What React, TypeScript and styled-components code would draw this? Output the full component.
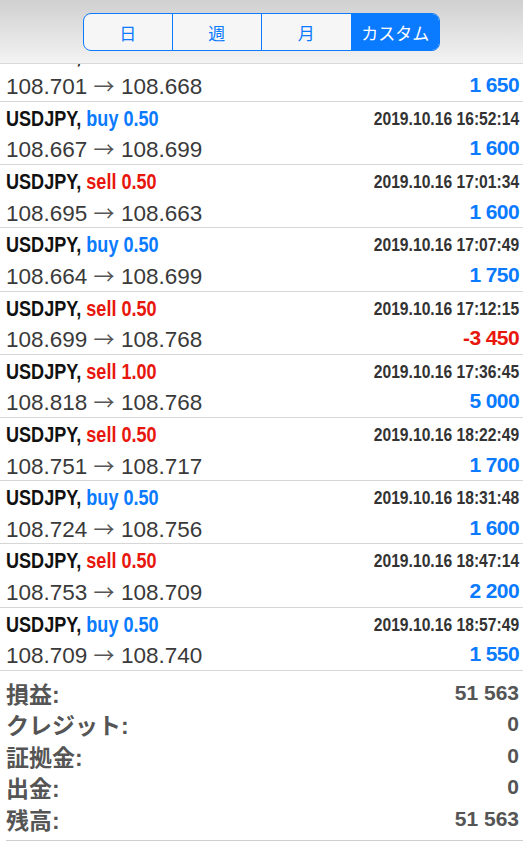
import React from "react";
import styled, { createGlobalStyle } from "styled-components";

const Global = createGlobalStyle`
  html, body { margin: 0; padding: 0; background: #fff; }
  body { font-family: "Liberation Sans", Arial, "Noto Sans CJK JP", sans-serif; }
  * { box-sizing: border-box; }
`;

const BLUE = "#0a7aff";
const RED = "#e8170d";

const Page = styled.div`
  width: 523px;
  height: 841px;
  overflow: hidden;
  display: flex;
  flex-direction: column;
  background: #fff;
`;

const Header = styled.header`
  height: 64px;
  flex: none;
  display: flex;
  justify-content: center;
  padding-top: 13px;
  background: linear-gradient(#d0d0d0, #f3f3f3);
  border-bottom: 1px solid #d8d8d8;
  position: relative;
  z-index: 1;
`;

const Segments = styled.div`
  display: flex;
  height: 38px;
  width: 357px;
  border: 1.5px solid ${BLUE};
  border-radius: 8px;
  overflow: hidden;
  background: #f6f6f6;
`;

const Segment = styled.div<{ $active?: boolean; $w: number }>`
  width: ${(p) => p.$w}px;
  display: flex;
  align-items: center;
  justify-content: center;
  font-family: "Noto Sans CJK JP", sans-serif;
  font-size: 17px;
  color: ${(p) => (p.$active ? "#fff" : BLUE)};
  background: ${(p) => (p.$active ? BLUE : "transparent")};
  & + & { border-left: 1.5px solid ${BLUE}; }
`;

const ListClip = styled.div`
  flex: none;
  overflow: hidden;
`;

const List = styled.div`
  margin-top: -25.3px;
`;

const Row = styled.div`
  height: 63.22px;
  padding: 3px 4px 0 6px;
  border-bottom: 1px solid #d6d6d6;
  display: grid;
  grid-template-columns: 1fr auto;
  grid-template-rows: 29px 29px;
  align-items: center;
`;

const Title = styled.div`
  font-weight: bold;
  font-size: 21.5px;
  color: #111;
  white-space: nowrap;
  transform: scaleX(0.84);
  transform-origin: left center;
`;

const Side = styled.span<{ $sell: boolean }>`
  color: ${(p) => (p.$sell ? RED : BLUE)};
`;

const Time = styled.div`
  font-weight: bold;
  font-size: 18px;
  color: #333;
  text-align: right;
  white-space: nowrap;
  transform: scaleX(0.87);
  transform-origin: right center;
`;

const Prices = styled.div`
  font-size: 22.5px;
  color: #3a3a3a;
  white-space: nowrap;
`;

const Arrow = styled.span`
  font-family: "Noto Sans CJK JP", sans-serif;
  font-size: 21px;
  color: #555;
`;

const Profit = styled.div<{ $neg: boolean }>`
  font-weight: bold;
  font-size: 21px;
  letter-spacing: -0.6px;
  color: ${(p) => (p.$neg ? RED : BLUE)};
  text-align: right;
  white-space: nowrap;
`;

const Summary = styled.div`
  margin-left: 6px;
  padding: 6px 4px 5px 0;
  border-bottom: 1px solid #cfcfcf;
`;

const SumRow = styled.div`
  height: 31.6px;
  display: flex;
  align-items: center;
  justify-content: space-between;
  font-weight: bold;
  color: #555;
`;

const SumLabel = styled.span`
  font-size: 23px;
`;

const SumValue = styled.span`
  font-size: 21px;
`;

type Trade = { side: "buy" | "sell"; vol: string; time: string; from: string; to: string; profit: string };

const trades: Trade[] = [
  { side: "sell", vol: "0.50", time: "2019.10.16 16:41:20", from: "108.701", to: "108.668", profit: "1 650" },
  { side: "buy", vol: "0.50", time: "2019.10.16 16:52:14", from: "108.667", to: "108.699", profit: "1 600" },
  { side: "sell", vol: "0.50", time: "2019.10.16 17:01:34", from: "108.695", to: "108.663", profit: "1 600" },
  { side: "buy", vol: "0.50", time: "2019.10.16 17:07:49", from: "108.664", to: "108.699", profit: "1 750" },
  { side: "sell", vol: "0.50", time: "2019.10.16 17:12:15", from: "108.699", to: "108.768", profit: "-3 450" },
  { side: "sell", vol: "1.00", time: "2019.10.16 17:36:45", from: "108.818", to: "108.768", profit: "5 000" },
  { side: "sell", vol: "0.50", time: "2019.10.16 18:22:49", from: "108.751", to: "108.717", profit: "1 700" },
  { side: "buy", vol: "0.50", time: "2019.10.16 18:31:48", from: "108.724", to: "108.756", profit: "1 600" },
  { side: "sell", vol: "0.50", time: "2019.10.16 18:47:14", from: "108.753", to: "108.709", profit: "2 200" },
  { side: "buy", vol: "0.50", time: "2019.10.16 18:57:49", from: "108.709", to: "108.740", profit: "1 550" },
];

const summary = [
  ["損益:", "51 563"],
  ["クレジット:", "0"],
  ["証拠金:", "0"],
  ["出金:", "0"],
  ["残高:", "51 563"],
];

const segs: [string, number, boolean][] = [
  ["日", 88, false],
  ["週", 90, false],
  ["月", 90, false],
  ["カスタム", 89, true],
];

export default function App() {
  return (
    <Page>
      <Global />
      <Header>
        <Segments>
          {segs.map(([t, w, a]) => (
            <Segment key={t} $w={w} $active={a}>{t}</Segment>
          ))}
        </Segments>
      </Header>
      <ListClip>
        <List>
          {trades.map((t, i) => (
            <Row key={i}>
              <Title>
                USDJPY, <Side $sell={t.side === "sell"}>{t.side} {t.vol}</Side>
              </Title>
              <Time>{t.time}</Time>
              <Prices>
                {t.from} <Arrow>→</Arrow> {t.to}
              </Prices>
              <Profit $neg={t.profit.startsWith("-")}>{t.profit}</Profit>
            </Row>
          ))}
        </List>
      </ListClip>
      <Summary>
        {summary.map(([l, v]) => (
          <SumRow key={l}>
            <SumLabel>{l}</SumLabel>
            <SumValue>{v}</SumValue>
          </SumRow>
        ))}
      </Summary>
    </Page>
  );
}
